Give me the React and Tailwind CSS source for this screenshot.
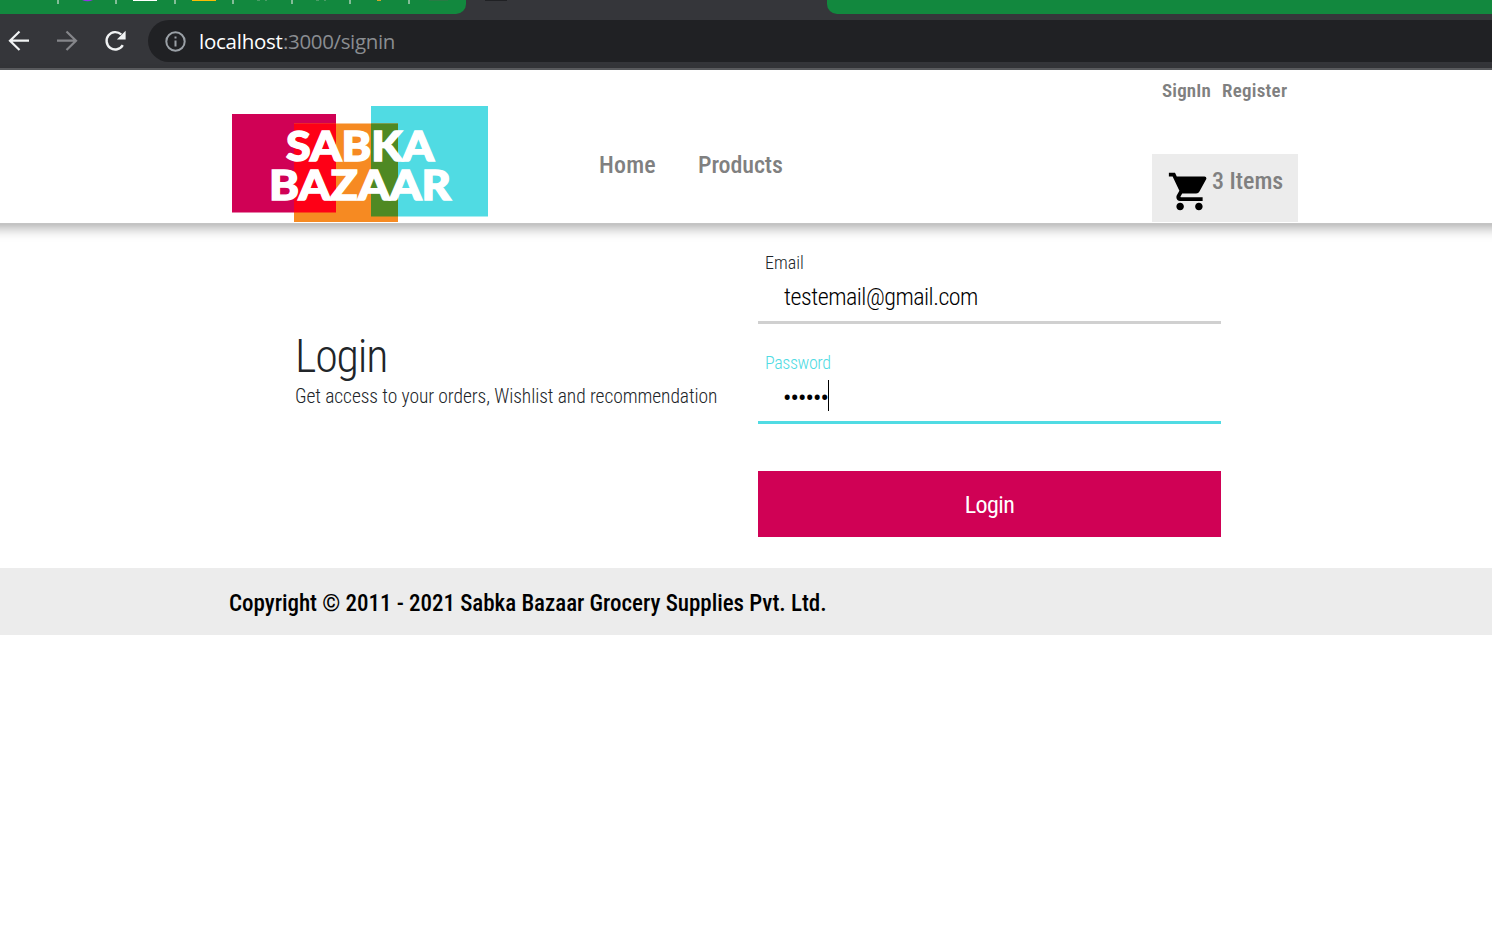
import React from "react";

const separators = [0, 1, 2, 3, 4, 5, 6];

function BrowserChrome() {
  return (
    <div className="h-[70px] border-b-2 border-[#5f6164] bg-[#35363a]">
      <div className="flex h-[14px] justify-between">
        <div className="w-[466px] overflow-hidden rounded-br-[10px] bg-[#12883e]">
          <svg width="466" height="14" viewBox="0 0 466 14">
            {separators.map((i) => (
              <rect key={i} x={57 + Math.floor(i * 58.5)} y="0" width="2" height="4" fill="#84bd98" />
            ))}
            <path d="M82 0h11q-5.500 2.500-11 0z" fill="#9334e6" />
            <rect x="133" y="0" width="24" height="1" fill="#fff" />
            <rect x="192" y="0" width="24" height="1" fill="#fbbc04" />
            <path d="M257 0h3v1h-3zM265 0h2v1h-2zM316 0h3v1h-3zM324 0h2v1h-2z" fill="#4a9c66" />
            <rect x="377" y="0" width="4" height="1" fill="#d0a52c" />
            <rect x="429" y="0" width="19" height="1" fill="#297b45" />
          </svg>
        </div>
        <div className="mr-auto ml-[19px] h-px w-[22px] bg-[#202124]" />
        <div className="w-[665px] rounded-bl-[10px] bg-[#12883e]" />
      </div>
      <div className="flex h-[54px] items-start pt-[6px]">
        <div className="flex h-[42px] w-[148px] shrink-0 items-center">
          <svg width="148" height="42" viewBox="0 0 148 42" fill="none" strokeWidth="2.2">
            <path d="M29 20.700H10M19.500 11.500 10 20.700l9.500 9.300" stroke="#f1f3f4" />
            <path d="M57 20.700h19M66.500 11.500 76 20.700 66.500 30" stroke="#85868a" />
            <path d="M122.800 25.200a8.700 8.700 0 1 1-1.500-10.700" stroke="#f1f3f4" strokeWidth="2.400" />
            <path d="M125.600 10.800v8.700h-8.700z" fill="#f1f3f4" />
          </svg>
        </div>
        <div className="flex h-[42px] flex-1 items-center rounded-l-full bg-[#202124] pl-[17px] font-['Open_Sans','Noto_Sans',sans-serif] text-[20.5px] [font-stretch:100%]">
          <svg width="21" height="21" viewBox="0 0 21 21">
            <circle cx="10.500" cy="10.500" r="9.200" fill="none" stroke="#9aa0a6" strokeWidth="2" />
            <path d="M9.500 5.500h2v2h-2zM9.500 9.500h2v6h-2z" fill="#9aa0a6" />
          </svg>
          <div className="ml-[13px] flex whitespace-nowrap text-[#8a8d91]">
            <span className="w-[84px] tracking-[-0.25px] text-white">localhost</span>
            <span className="tracking-[-0.35px]">:3000/signin</span>
          </div>
        </div>
      </div>
    </div>
  );
}

function Logo() {
  return (
    <svg width="256" height="116" viewBox="0 0 256 116" className="mt-[36px] shrink-0">
      <rect x="0" y="8" width="104" height="98.500" fill="#d00155" />
      <rect x="139" y="0" width="117" height="110.500" fill="#50dbe3" />
      <rect x="62" y="17.500" width="104" height="98.500" fill="#f68a22" />
      <rect x="62" y="17.500" width="42" height="89" fill="#fe0016" />
      <rect x="139" y="17.500" width="27" height="93" fill="#4f8923" />
      <g className="font-['Lato',sans-serif] font-black" fill="#fff" stroke="#fff" strokeWidth="1.4" fontSize="41">
        <text x="54" y="55" textLength="148" lengthAdjust="spacingAndGlyphs">SABKA</text>
        <text x="37" y="94" textLength="182" lengthAdjust="spacingAndGlyphs">BAZAAR</text>
      </g>
    </svg>
  );
}

function Header() {
  return (
    <header className="-mx-4 flex h-[154px] border-b border-[#c4c4c4] pr-[16px] pl-[248px] text-[#808080] shadow-[0_4px_12px_rgba(0,0,0,0.33)]">
      <Logo />
      <nav className="mt-[77px] ml-[111px] flex gap-[42px] text-[24px] leading-[36px] font-medium">
        <a className="w-[57px] tracking-[0.2px]">Home</a>
        <a className="w-[86px] tracking-[-0.1px]">Products</a>
      </nav>
      <div className="mr-[194px] ml-auto flex w-[146px] flex-col">
        <div className="flex h-[84px] gap-[11px] pt-[6px] pl-[10px] text-[19px] leading-[29px] font-semibold">
          <a className="w-[49px] tracking-[0.15px]">SignIn</a>
          <a className="tracking-[0.25px]">Register</a>
        </div>
        <div className="flex h-[68px] bg-[#ececec] pt-[15px] pl-[15px]">
          <svg width="45" height="45" viewBox="0 0 24 24" className="shrink-0 text-black" fill="currentColor">
            <path d="M7 18c-1.100 0-1.990.9-1.990 2S5.900 22 7 22s2-.9 2-2-.9-2-2-2zM1 2v2h2l3.600 7.590-1.350 2.450c-.16.28-.25.61-.25.96 0 1.100.9 2 2 2h12v-2H7.420c-.14 0-.25-.11-.25-.25l.03-.12.9-1.630h7.450c.75 0 1.410-.41 1.750-1.030l3.580-6.490c.08-.14.12-.31.12-.48 0-.55-.45-1-1-1H5.210l-.94-2H1zm16 16c-1.100 0-1.990.9-1.990 2s.89 2 1.990 2 2-.9 2-2-.9-2-2-2z" />
          </svg>
          <span className="-mt-[6px] text-[24px] leading-[36px] font-medium whitespace-nowrap">3 Items</span>
        </div>
      </div>
    </header>
  );
}

function LoginForm() {
  return (
    <main className="flex h-[344px] pl-[295px]">
      <section className="w-[463px] pt-[104px] font-light text-[#212529]">
        <h1 className="text-[46px] leading-[56px] tracking-[-1.2px]">Login</h1>
        <p className="pt-px text-[19.5px] leading-[24px] tracking-[-0.08px] whitespace-nowrap">
          Get access to your orders, Wishlist and recommendation
        </p>
      </section>
      <form className="w-[463px] font-light text-black">
        <div className="h-[100px] border-b-[3px] border-[#d0d0d0] pt-[27px]">
          <label className="block pl-[7px] text-[18px] leading-[24px] text-[#212529]">Email</label>
          <div className="mt-[4px] pl-[26px] text-[24px] leading-[36px] tracking-[-0.5px]">testemail@gmail.com</div>
        </div>
        <div className="h-[100px] border-b-[3px] border-[#50dbe3] pt-[27px]">
          <label className="block pl-[7px] text-[18px] leading-[24px] tracking-[-0.4px] text-[#50dbe3]">Password</label>
          <div className="mt-[5px] flex items-start pl-[25px] text-[25px] leading-[38px]">
            <span className="w-[45px] font-normal tracking-[-0.95px] whitespace-nowrap">••••••</span>
            <span className="h-[31px] w-px bg-black" />
          </div>
        </div>
        <div className="mt-[47px] flex h-[66px] items-center justify-center bg-[#d00155] pt-px text-[24px] font-normal tracking-[-0.6px] text-white">
          Login
        </div>
      </form>
    </main>
  );
}

export default function App() {
  return (
    <div className="min-h-[943px] overflow-hidden bg-white font-['Roboto',sans-serif] [font-stretch:75%]">
      <BrowserChrome />
      <Header />
      <LoginForm />
      <footer className="flex h-[67px] items-center bg-[#ececec] pt-[5px] pl-[229px] text-[23px] font-medium tracking-[-0.03px] text-black">
        <span className="whitespace-nowrap">Copyright © 2011 - 2021 Sabka Bazaar Grocery Supplies Pvt. Ltd.</span>
      </footer>
    </div>
  );
}
